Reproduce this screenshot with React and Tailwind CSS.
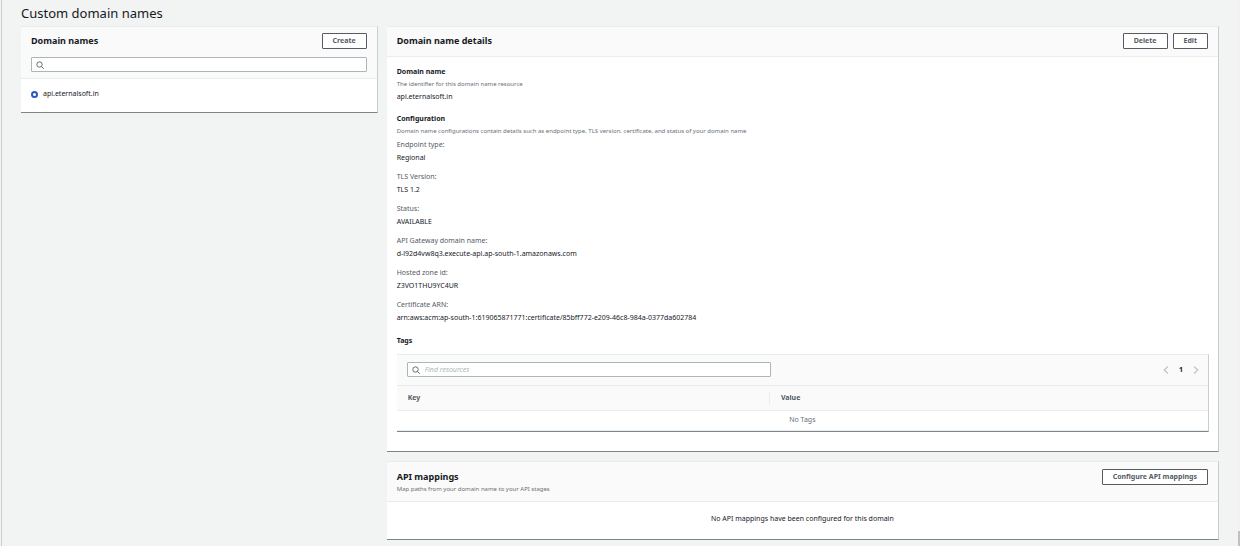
import React from 'react'

const CONFIG = [
  { label: 'Endpoint type:', value: 'Regional' },
  { label: 'TLS Version:', value: 'TLS 1.2' },
  { label: 'Status:', value: 'AVAILABLE' },
  { label: 'API Gateway domain name:', value: 'd-l92d4vw8q3.execute-api.ap-south-1.amazonaws.com' },
  { label: 'Hosted zone id:', value: 'Z3VO1THU9YC4UR' },
  {
    label: 'Certificate ARN:',
    value: 'arn:aws:acm:ap-south-1:619065871771:certificate/85bff772-e209-46c8-984a-0377da602784',
  },
]

function Button({ children }) {
  return (
    <button
      type="button"
      className="h-4 shrink-0 px-2.5 border border-[#545b64] rounded-[1px] bg-white text-[#545b64] text-[7px] leading-3 font-bold whitespace-nowrap cursor-pointer flex items-center"
    >
      {children}
    </button>
  )
}

function SearchInput({ label, placeholder }) {
  return (
    <label className="flex items-center gap-[5px] h-[15px] w-full px-1 bg-white border border-[#aab7b8] rounded-[1px]">
      <svg className="w-2 h-2 shrink-0" viewBox="0 0 8 8" fill="none" stroke="#545b64" aria-hidden="true">
        <circle cx="3.5" cy="3.5" r="2.7" strokeWidth="0.9" />
        <path d="M5.4 5.4 L7.7 7.7" strokeWidth="1" />
      </svg>
      <input
        type="text"
        aria-label={label}
        placeholder={placeholder}
        className="min-w-0 flex-1 bg-transparent outline-none text-[7px] leading-3 placeholder:italic placeholder:text-[#aab7b8]"
      />
    </label>
  )
}

function Card({ children }) {
  return (
    <section className="bg-white border-t border-r border-b border-t-[#eaeded] border-r-[#c6cfcf] border-b-[#7b868c]">
      {children}
    </section>
  )
}

function Chevron({ d }) {
  return (
    <svg className="w-1.5 h-2" viewBox="0 0 6 8" fill="none" stroke="#bcc5c6" strokeWidth="1.2" aria-hidden="true">
      <path d={d} />
    </svg>
  )
}

function TagsTable() {
  return (
    <Card>
      <div className="flex items-start justify-between h-[31px] pl-2.5 pr-[9px] pt-[7px] bg-[#fafafa] border-b border-[#eaeded]">
        <div className="w-[46%]">
          <SearchInput label="Find resources" placeholder="Find resources" />
        </div>
        <div className="flex items-center gap-2.5 h-4">
          <button type="button" aria-label="Previous page" disabled>
            <Chevron d="M5 0.5 L1.2 4 L5 7.5" />
          </button>
          <span className="font-bold">1</span>
          <button type="button" aria-label="Next page" disabled>
            <Chevron d="M1 0.5 L4.8 4 L1 7.5" />
          </button>
        </div>
      </div>
      <table className="w-full table-fixed border-collapse">
        <thead className="bg-[#fafafa] text-[#545b64]">
          <tr className="h-6 border-b border-[#eaeded] text-left">
            <th className="w-[46%] p-0 font-bold">
              <div className="pl-[11px] border-r border-[#eaeded]">Key</div>
            </th>
            <th className="p-0 pl-[11px] font-bold">Value</th>
          </tr>
        </thead>
        <tbody>
          <tr className="h-5 border-b border-[#eaeded]">
            <td colSpan={2} className="p-0 text-center text-[#687078]">
              No Tags
            </td>
          </tr>
        </tbody>
      </table>
    </Card>
  )
}

function DomainNames() {
  return (
    <Card>
      <div className="px-2.5 pt-1.5 pb-1.5 bg-[#fafafa] border-b border-[#eaeded]">
        <div className="flex items-start justify-between mb-2">
          <h2 className="text-[9px] leading-4 font-bold">Domain names</h2>
          <Button>Create</Button>
        </div>
        <SearchInput label="Search domain names" />
      </div>
      <label className="flex items-center gap-[5px] px-2.5 pt-[9px] pb-3">
        <input
          type="radio"
          name="domain"
          defaultChecked
          className="appearance-none w-[7px] h-[7px] rounded-full border-2 border-[#2b56c4] bg-white"
        />
        api.eternalsoft.in
      </label>
    </Card>
  )
}

function DomainDetails() {
  return (
    <Card>
      <div className="flex items-start justify-between h-[30px] px-2.5 pt-1.5 bg-[#fafafa] border-b border-[#eaeded]">
        <h2 className="text-[9px] leading-4 font-bold">Domain name details</h2>
        <div className="flex gap-[5px]">
          <Button>Delete</Button>
          <Button>Edit</Button>
        </div>
      </div>
      <div className="pl-2.5 pr-[9px] pt-[9px] pb-[19px]">
        <h3 className="font-bold">Domain name</h3>
        <p className="text-[6px] leading-[13px] text-[#687078]">The identifier for this domain name resource</p>
        <p>api.eternalsoft.in</p>

        <h3 className="mt-2.5 font-bold">Configuration</h3>
        <p className="text-[6px] leading-[13px] text-[#687078]">
          Domain name configurations contain details such as endpoint type, TLS version, certificate, and status of your
          domain name
        </p>
        <dl className="flex flex-col gap-[7px] pt-px">
          {CONFIG.map(({ label, value }) => (
            <div key={label}>
              <dt className="text-[#545b64]">{label}</dt>
              <dd className="leading-[13px]">{value}</dd>
            </div>
          ))}
        </dl>

        <h3 className="mt-[11px] mb-[7px] font-bold">Tags</h3>
        <TagsTable />
      </div>
    </Card>
  )
}

function ApiMappings() {
  return (
    <Card>
      <div className="flex items-start justify-between h-10 px-2.5 pt-[7px] bg-[#fafafa] border-b border-[#eaeded]">
        <div>
          <h2 className="text-[9px] leading-4 font-bold">API mappings</h2>
          <p className="text-[6px] leading-2 text-[#687078]">Map paths from your domain name to your API stages</p>
        </div>
        <Button>Configure API mappings</Button>
      </div>
      <p className="pt-[11px] pb-[14px] text-center">No API mappings have been configured for this domain</p>
    </Card>
  )
}

export default function App() {
  return (
    <div className="flex min-h-screen bg-[#f2f3f3] font-['Noto_Sans','Open_Sans',sans-serif] text-[7px] leading-3 text-[#16191f]">
      <main className="flex-1 min-w-0 ml-px pl-[19px] pr-[19px] pt-1 pb-1.5 border-l border-[#c9cfd0]">
        <h1 className="mb-1 text-[13px] leading-[18px]">Custom domain names</h1>
        <div className="grid grid-cols-[3fr_7fr] items-start gap-[9px]">
          <DomainNames />
          <div className="flex flex-col gap-[9px] min-w-0">
            <DomainDetails />
            <ApiMappings />
          </div>
        </div>
      </main>
      {/* Scroll track */}
      <div className="flex flex-col justify-end w-0.5 bg-[#f1f1f1]">
        <div className="h-[15px] bg-[#c1c1c1]" />
      </div>
    </div>
  )
}
